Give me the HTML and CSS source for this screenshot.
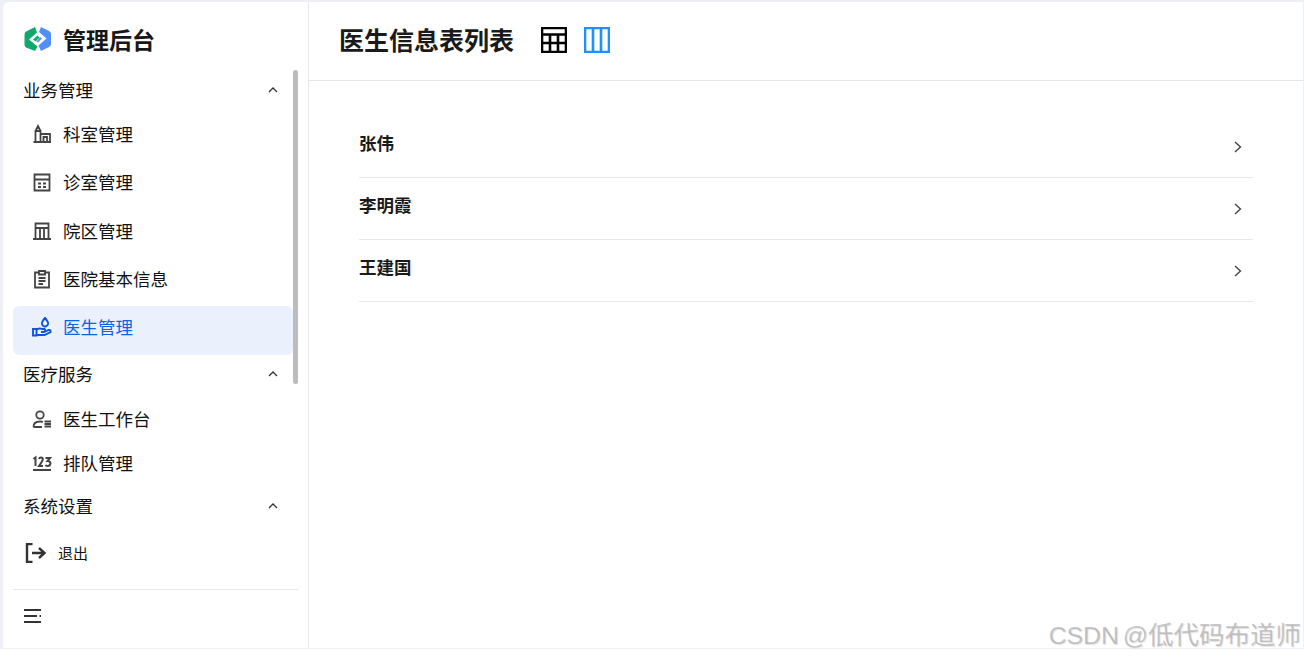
FILE: index.html
```html
<!DOCTYPE html>
<html>
    <head>
        <meta http-equiv="Content-type" content="text/html; charset=utf-8" />
        <title>管理后台</title>
        <link rel="stylesheet" href="styles.css">
    </head>
    <body>
        <div class="frame">
            <div class="sidebar">
                <div class="brand">
                    <svg class="brandLogo" width="30" height="26" viewBox="0 0 30 26">
                        <path fill="#10a86f" d="M12 1 L3 5.500 Q1.500 6.500 1.500 8.500 V18.500 Q1.500 20.500 3 21.500 L12 25 L14.500 20.500 L6 13.500 L14 6.500 Z"/>
                        <path fill="#4f8ff7" d="M18 1 L26 5 Q28 6 28 8 V18 Q28 20 26 21 L18 25 L15.500 19.500 L23.500 12.500 L16 6 Z"/>
                        <path fill="#10a86f" d="M10 13.500 L14.500 9.500 L16.500 11.500 L12.500 15.500 Z"/>
                        <path fill="#4f8ff7" d="M19 12.500 L15 16.500 L13.500 15.500 L17 11 Z"/>
                    </svg>
                    <span>管理后台</span>
                </div>
                <div class="menuWrap">
                    <div class="scrollThumb"></div>
                    <div class="groupRow first"><span>业务管理</span><svg class="caret" width="12" height="8" viewBox="0 0 12 8"><path d="M2 6 L6 2 L10 6"/></svg></div>
                    <div class="menuRow">
                        <svg class="icon" viewBox="0 0 20 20"><path d="M1.500 18 H19 M3.500 18 V7 H8.500 V18 M3.500 7 L6 2 L8.500 7 M8.500 10 H18 V18 M11.500 18 V13 H15 V18"/></svg>
                        <span>科室管理</span>
                    </div>
                    <div class="menuRow">
                        <svg class="icon" viewBox="0 0 20 20"><path d="M2.500 2.500 H17.500 V18.500 H2.500 Z M2.500 7.500 H17.500 M6 11.500 H9 M11 11.500 H14 M6 15 H9 M11 15 H14"/></svg>
                        <span>诊室管理</span>
                    </div>
                    <div class="menuRow">
                        <svg class="icon" viewBox="0 0 20 20"><path d="M3.500 2.500 H16.500 V7 H3.500 Z M1 18 H19 M3.500 7 V18 M8 7 V18 M12 7 V18 M16.500 7 V18"/></svg>
                        <span>院区管理</span>
                    </div>
                    <div class="menuRow">
                        <svg class="icon" viewBox="0 0 20 20"><path d="M7 3.500 H3 V18.500 H17 V3.500 H13 M7 2 H13 V5.500 H7 Z M6.500 9 H13.500 M6.500 12 H13.500 M6.500 15 H11"/></svg>
                        <span>医院基本信息</span>
                    </div>
                    <div class="menuRow active">
                        <svg class="icon" viewBox="0 0 20 20"><path d="M1 12 H4.500 V18.500 H1 Z M4.500 13 Q7 10.500 10 12 H12.500 Q14 13.500 12 15 H9 M4.500 18 H12.500 L18.500 15 Q19 12.500 16.500 13 L12.500 15 M13 1 Q9.500 5 10 7 Q10.800 9.500 13 9.500 Q15.200 9.500 16 7 Q16.500 5 13 1 Z"/></svg>
                        <span>医生管理</span>
                    </div>
                    <div class="groupRow second"><span>医疗服务</span><svg class="caret" width="12" height="8" viewBox="0 0 12 8"><path d="M2 6 L6 2 L10 6"/></svg></div>
                    <div class="menuRow short">
                        <svg class="icon" viewBox="0 0 20 20"><circle cx="8" cy="6" r="3.700"/><path d="M1.500 18 Q1.500 12.500 8 12.500 Q10 12.500 11 13 M1.500 18 H10 M12.500 12.500 H19 M12.500 15 H19 M12.500 17.500 H19"/></svg>
                        <span>医生工作台</span>
                    </div>
                    <div class="menuRow short">
                        <svg class="icon numIcon" viewBox="0 0 20 20"><path d="M1.500 6 L3.500 4.500 V13 M7 6 Q7.500 4.500 9 4.500 Q11 4.500 10.800 6.500 Q10.500 8 7 13 H11 M13.500 5 H18 L15.500 8 Q18.500 8 18.500 10.500 Q18 13 15.800 13 Q14 13 13.500 11.800 M1 17 H19"/></svg>
                        <span>排队管理</span>
                    </div>
                    <div class="groupRow third"><span>系统设置</span><svg class="caret" width="12" height="8" viewBox="0 0 12 8"><path d="M2 6 L6 2 L10 6"/></svg></div>
                </div>
                <div class="logoutRow">
                    <svg class="logoutIcon" width="22" height="20" viewBox="0 0 22 20"><path d="M7.500 1 H2 V19 H7.500 M7 10 H19 M14 5 L19.500 10 L14 15"/></svg>
                    <span>退出</span>
                </div>
                <div class="sideFooter">
                    <svg class="burger" width="20" height="16" viewBox="0 0 20 16"><path d="M1 2 H18 M1 8 H14 M16.500 8 H18 M1 14 H18"/></svg>
                </div>
            </div>
            <div class="main">
                <div class="topBar">
                    <h1>医生信息表列表</h1>
                    <svg class="viewIcon" width="26" height="26" viewBox="0 0 26 26"><path stroke="#000" d="M1 1 H25 V25 H1 Z M1 7.500 H25 M1 16 H25 M9 7.500 V25 M17 7.500 V25"/></svg>
                    <svg class="viewIcon blue" width="26" height="26" viewBox="0 0 26 26"><path stroke="#1e90ff" d="M1 1 H25 V25 H1 Z M9 1 V25 M17 1 V25"/></svg>
                </div>
                <div class="list">
                    <div class="listRow"><span>张伟</span><svg class="chevron" width="10" height="14" viewBox="0 0 10 14"><path d="M2 2 L7.500 7 L2 12"/></svg></div>
                    <div class="listRow"><span>李明霞</span><svg class="chevron" width="10" height="14" viewBox="0 0 10 14"><path d="M2 2 L7.500 7 L2 12"/></svg></div>
                    <div class="listRow"><span>王建国</span><svg class="chevron" width="10" height="14" viewBox="0 0 10 14"><path d="M2 2 L7.500 7 L2 12"/></svg></div>
                </div>
                <div class="watermark">CSDN @<span class="markName">低代码布道师</span></div>
            </div>
        </div>
    </body>
</html>
```

FILE: styles.css
```css
body, html {
    margin: 0px;
    padding: 0px;
    height: 100%;
    background-color: white;
    font-family: "Noto Sans CJK SC", "Liberation Sans", sans-serif;
    color: #111;
    overflow: hidden;
}
.frame {
    box-sizing: border-box;
    display: flex;
    height: 649px;
    padding-top: 2px;
    padding-left: 3px;
    padding-right: 1px;
    padding-bottom: 1px;
    background-color: #eef0f5;
}
.sidebar {
    width: 306px;
    flex-shrink: 0;
    box-sizing: border-box;
    border-right: 1px solid #e6e7ea;
    border-top-left-radius: 6px;
    display: flex;
    flex-direction: column;
    background-color: white;
}
.brand {
    height: 68px;
    box-sizing: border-box;
    padding-left: 20px;
    padding-top: 6px;
    display: flex;
    align-items: center;
    gap: 10px;
    font-size: 23px;
    font-weight: 700;
    line-height: 1;
    color: #171717;
}
.menuWrap {
    position: relative;
}
.scrollThumb {
    position: absolute;
    left: 290px;
    top: 0px;
    width: 5px;
    height: 314px;
    border-radius: 3px;
    background-color: #bcbcbc;
}
.groupRow {
    display: flex;
    align-items: center;
    justify-content: space-between;
    width: 276px;
    padding-left: 20px;
    padding-bottom: 2px;
    box-sizing: border-box;
    font-size: 17.500px;
    line-height: 24px;
}
.groupRow.first {
    height: 43px;
    padding-bottom: 4px;
}
.groupRow.second {
    height: 43px;
}
.groupRow.third {
    height: 44px;
}
.caret {
    fill: none;
    stroke: #333;
    stroke-width: 1.300;
}
.menuRow {
    height: 48.300px;
    width: 280px;
    margin-left: 10px;
    box-sizing: border-box;
    padding-left: 19px;
    padding-bottom: 6px;
    display: flex;
    align-items: center;
    gap: 11px;
    font-size: 17.500px;
    line-height: 24px;
    border-radius: 6px;
}
.menuRow.short {
    height: 44px;
    padding-bottom: 0px;
}
.menuRow.active {
    height: 49px;
    padding-bottom: 7px;
    margin-bottom: -1.500px;
    background-color: #ebf1fc;
    color: #0d63e3;
}
.icon {
    width: 20px;
    height: 20px;
    flex-shrink: 0;
    fill: none;
    stroke: #444;
    stroke-width: 1.800;
}
.numIcon {
    stroke-width: 2;
}
.menuRow.active .icon {
    stroke: #0d55d8;
    stroke-width: 1.900;
}
.logoutRow {
    height: 50px;
    box-sizing: border-box;
    padding-left: 22px;
    padding-bottom: 2px;
    display: flex;
    align-items: center;
    gap: 11px;
    font-size: 15px;
}
.logoutIcon {
    fill: none;
    stroke: #333;
    stroke-width: 2.400;
}
.sideFooter {
    margin-left: 10px;
    margin-right: 10px;
    margin-top: 10px;
    padding-left: 10px;
    padding-top: 18px;
    border-top: 1px solid #e6e7ea;
    flex: 1;
}
.burger {
    display: block;
    fill: none;
    stroke: #333;
    stroke-width: 1.800;
}
.main {
    flex: 1;
    position: relative;
    min-width: 0px;
    background-color: white;
}
.topBar {
    height: 79px;
    box-sizing: border-box;
    border-bottom: 1px solid #e6e7ea;
    padding-left: 30px;
    padding-bottom: 4px;
    display: flex;
    align-items: center;
}
.topBar h1 {
    margin: 0px;
    font-size: 25px;
    font-weight: 700;
    line-height: 1;
    color: #1a1a1a;
    margin-right: 27px;
}
.viewIcon {
    fill: none;
    stroke-width: 2.600;
    margin-right: 17px;
    margin-top: 2px;
}
.list {
    margin-left: 50px;
    width: 894px;
    padding-top: 35px;
}
.listRow {
    height: 62px;
    box-sizing: border-box;
    border-bottom: 1px solid #e8e8e8;
    display: flex;
    align-items: center;
    justify-content: space-between;
    padding-right: 10px;
    font-size: 17.500px;
    font-weight: 700;
    color: #1a1a1a;
}
.listRow span {
    margin-top: -8px;
}
.chevron {
    fill: none;
    stroke: #444;
    stroke-width: 1.400;
}
.watermark {
    position: absolute;
    right: 2px;
    bottom: -3px;
    font-family: "Liberation Sans", "Noto Sans CJK SC", sans-serif;
    font-size: 24.800px;
    line-height: 30px;
    word-spacing: -3px;
    color: rgba(150, 150, 150, 0.5);
    text-shadow: 1px 1px 1px rgba(170, 170, 170, 0.35);
    white-space: nowrap;
}
.markName {
    font-size: 25.500px;
}
```
